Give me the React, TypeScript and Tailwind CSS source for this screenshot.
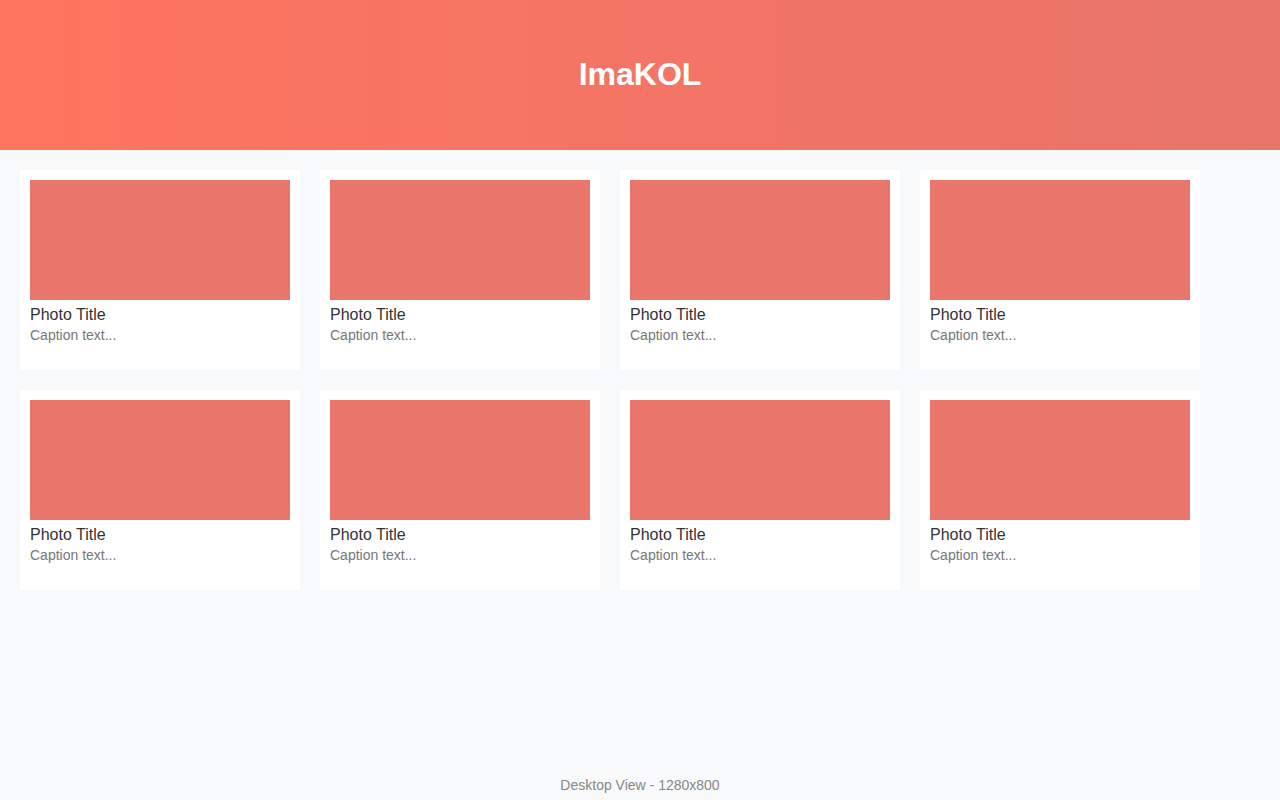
const photos = Array.from({ length: 8 }, (_, i) => ({ id: i, title: 'Photo Title', caption: 'Caption text...' }));

export default function App() {
  return (
    <div className="min-h-screen flex flex-col bg-[#f8f9fb] font-['Liberation_Sans',Arial,sans-serif]">
      {/* Header */}
      <header className="h-[150px] pb-[2px] flex items-center justify-center bg-gradient-to-r from-[#ff745e] to-[#e8756a]">
        <h1 className="text-[32px] font-bold text-white">ImaKOL</h1>
      </header>

      {/* Gallery */}
      <main className="flex-1 p-5">
        <div className="grid grid-cols-[repeat(4,280px)] gap-5">
          {photos.map((p) => (
            <div key={p.id} className="bg-white h-[200px] p-[10px]">
              <div className="h-[120px] bg-[#e9756b]" />
              <div className="mt-[5px] text-[16px] leading-[20px] text-[#333]">{p.title}</div>
              <div className="text-[14px] leading-[20px] text-[#777]">{p.caption}</div>
            </div>
          ))}
        </div>
      </main>

      <footer className="h-[30px] flex items-center justify-center text-[14px] text-[#888]">
        Desktop View - 1280x800
      </footer>
    </div>
  );
}
